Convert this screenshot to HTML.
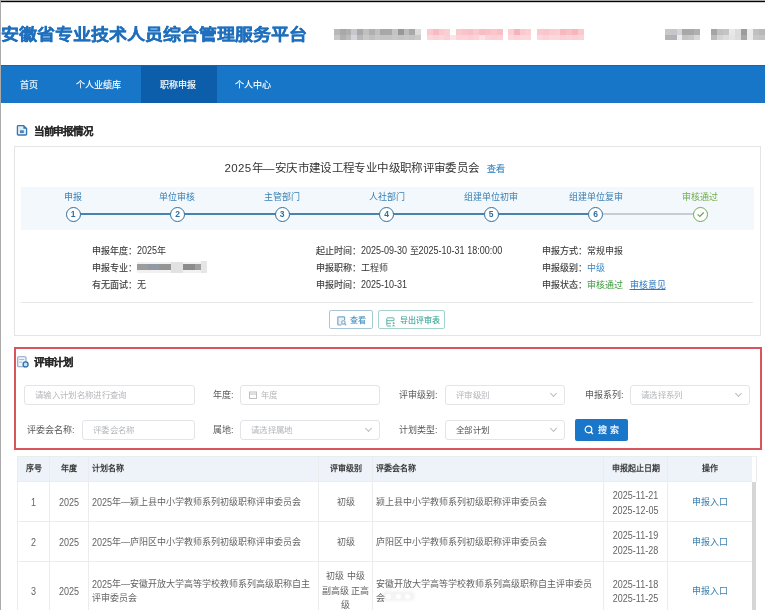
<!DOCTYPE html>
<html lang="zh-CN">
<head>
<meta charset="utf-8">
<style>
*{box-sizing:border-box;margin:0;padding:0}
html,body{width:765px;height:610px;overflow:hidden;background:#fff}body{filter:blur(0.35px)}
body{position:relative;font-family:"Liberation Sans",sans-serif;color:#333;font-size:9px}
.a{position:absolute;white-space:nowrap}
#topline{left:0;top:0;width:765px;height:3px;background:linear-gradient(#a8a8a8 0,#a8a8a8 1px,#050505 1px,#050505 2px,#d0d0d0 2px,#d0d0d0 3px)}
#leftline{left:0;top:0;width:1px;height:610px;background:#ababab}
#title{left:0.5px;top:21.5px;transform:scaleY(0.89);transform-origin:0 50%;font-size:18px;font-weight:bold;-webkit-text-stroke:0.4px #1f6fbd;color:#1f6fbd;line-height:26px}
.mz{position:absolute;height:6px}
#nav{left:1px;top:65px;width:764px;height:38px;background:#1876c9;border-top:1px solid #1065b4}
#nav .it{position:absolute;top:0;height:37px;line-height:39px;color:#fff;font-size:9px;text-align:center;-webkit-text-stroke:0.15px #fff}
#nav .act{background:#0c5eaa}
.sec-title{font-size:10.5px;letter-spacing:-0.3px;font-weight:bold;color:#2a2a2a;line-height:14px;-webkit-text-stroke:0.2px #2a2a2a}
#card{left:14px;top:146px;width:747px;height:190px;border:1px solid #e3e4e6;background:#fff}
#steps{left:21px;top:187px;width:733px;height:43px;background:#f3f8fc}
.lbl{position:absolute;font-size:9px;color:#3a80b5;line-height:12px;text-align:center;width:80px}
.circ{position:absolute;width:15px;height:15px;border:1.8px solid #306f9d;border-radius:50%;background:#fff;color:#306f9d;font-size:8.5px;font-weight:bold;line-height:13.5px;text-align:center}
.info{font-size:9px;color:#333;line-height:12px}
.info b{font-weight:normal;color:#3a3a3a;-webkit-text-stroke:0.12px #3a3a3a}
.btn{position:absolute;height:18px;border:1px solid #7aa6cc;border-radius:2px;font-size:9px;line-height:16px}
#redbox{left:14px;top:347px;width:748px;height:103px;border:2px solid #d8555b}
.inp{position:absolute;height:20px;border:1px solid #e3e4e8;border-radius:3px;background:#fff;font-size:8.45px;letter-spacing:0.35px;color:#b4b6ba;line-height:19px;padding-left:10px}
.flab{position:absolute;font-size:9px;color:#575757;line-height:12px}
.chev{position:absolute;right:7px;top:8px;width:7px;height:4px;background:none}.chev:before{content:"";position:absolute;left:1px;top:-3px;width:4px;height:4px;border-right:1px solid #bdbdbd;border-bottom:1px solid #bdbdbd;transform:rotate(45deg)}
#table{left:17px;top:456px;width:736px}
table{border-collapse:collapse;table-layout:fixed;width:735px}
td,th{white-space:normal;border:1px solid #ebecee;font-size:9px;color:#636363;text-align:center;vertical-align:middle}
th{background:#eef3fa;font-weight:bold;color:#3a3a3a;height:25px;font-size:8px;line-height:12px}
td{line-height:14.5px;padding-top:2px}
td.l,th.l{text-align:left;padding-left:3px;padding-right:5px}
.n{font-style:normal;display:inline-block;transform:scaleY(1.12);transform-origin:50% 78%}
td .n{transform:translateY(0.8px) scaleY(1.12)}
</style>
</head>
<body>
<div class="a" id="topline"></div>
<div class="a" id="leftline"></div>
<div class="a" id="title">安徽省专业技术人员综合管理服务平台</div>

<!-- mosaic header blocks -->
<div style="position:absolute;left:0;top:0;filter:blur(0.6px)">
<div class="a" style="left:334.0px;top:29px;width:6.1px;height:5.7px;background:#b8b8b8"></div>
<div class="a" style="left:334.0px;top:34.7px;width:6.1px;height:5.7px;background:#c8c8c8"></div>
<div class="a" style="left:339.8px;top:29px;width:6.1px;height:5.7px;background:#a8a8a8"></div>
<div class="a" style="left:339.8px;top:34.7px;width:6.1px;height:5.7px;background:#b0b0b0"></div>
<div class="a" style="left:345.6px;top:29px;width:6.1px;height:5.7px;background:#b0aeae"></div>
<div class="a" style="left:345.6px;top:34.7px;width:6.1px;height:5.7px;background:#bcbcbc"></div>
<div class="a" style="left:351.4px;top:29px;width:6.1px;height:5.7px;background:#c8c8cc"></div>
<div class="a" style="left:351.4px;top:34.7px;width:6.1px;height:5.7px;background:#d4d4dc"></div>
<div class="a" style="left:357.2px;top:29px;width:6.1px;height:5.7px;background:#a8a8a8"></div>
<div class="a" style="left:357.2px;top:34.7px;width:6.1px;height:5.7px;background:#b8b8b8"></div>
<div class="a" style="left:363.0px;top:29px;width:6.1px;height:5.7px;background:#c0c0c0"></div>
<div class="a" style="left:363.0px;top:34.7px;width:6.1px;height:5.7px;background:#c8c8c8"></div>
<div class="a" style="left:368.8px;top:29px;width:6.1px;height:5.7px;background:#b0b0b0"></div>
<div class="a" style="left:368.8px;top:34.7px;width:6.1px;height:5.7px;background:#c0c0c0"></div>
<div class="a" style="left:374.6px;top:29px;width:6.1px;height:5.7px;background:#c0c0c0"></div>
<div class="a" style="left:374.6px;top:34.7px;width:6.1px;height:5.7px;background:#c8c8c8"></div>
<div class="a" style="left:380.4px;top:29px;width:6.1px;height:5.7px;background:#a8a8a8"></div>
<div class="a" style="left:380.4px;top:34.7px;width:6.1px;height:5.7px;background:#c4c4c4"></div>
<div class="a" style="left:386.2px;top:29px;width:6.1px;height:5.7px;background:#a8a8a8"></div>
<div class="a" style="left:386.2px;top:34.7px;width:6.1px;height:5.7px;background:#c4c4c4"></div>
<div class="a" style="left:392.0px;top:29px;width:6.1px;height:5.7px;background:#c4c4c4"></div>
<div class="a" style="left:392.0px;top:34.7px;width:6.1px;height:5.7px;background:#c8c8c8"></div>
<div class="a" style="left:397.8px;top:29px;width:6.1px;height:5.7px;background:#989898"></div>
<div class="a" style="left:397.8px;top:34.7px;width:6.1px;height:5.7px;background:#c4c4c4"></div>
<div class="a" style="left:403.6px;top:29px;width:6.1px;height:5.7px;background:#bcbcbc"></div>
<div class="a" style="left:403.6px;top:34.7px;width:6.1px;height:5.7px;background:#c8c8c8"></div>
<div class="a" style="left:409.4px;top:29px;width:6.1px;height:5.7px;background:#a8a8a8"></div>
<div class="a" style="left:409.4px;top:34.7px;width:6.1px;height:5.7px;background:#c4c4c4"></div>
<div class="a" style="left:415.2px;top:29px;width:6.1px;height:5.7px;background:#dcdcdc"></div>
<div class="a" style="left:415.2px;top:34.7px;width:6.1px;height:5.7px;background:#cacaca"></div>
<div class="a" style="left:427.0px;top:29px;width:6.0px;height:5.7px;background:#fac9cf"></div>
<div class="a" style="left:427.0px;top:34.7px;width:6.0px;height:5.7px;background:#fcd7db"></div>
<div class="a" style="left:432.8px;top:29px;width:6.0px;height:5.7px;background:#f7bbc1"></div>
<div class="a" style="left:432.8px;top:34.7px;width:6.0px;height:5.7px;background:#fbd3d7"></div>
<div class="a" style="left:438.5px;top:29px;width:6.0px;height:5.7px;background:#fac9cf"></div>
<div class="a" style="left:438.5px;top:34.7px;width:6.0px;height:5.7px;background:#fcd7db"></div>
<div class="a" style="left:444.2px;top:29px;width:6.0px;height:5.7px;background:#faced3"></div>
<div class="a" style="left:444.2px;top:34.7px;width:6.0px;height:5.7px;background:#fbd1d6"></div>
<div class="a" style="left:450px;top:34.7px;width:6px;height:5.7px;background:#fde3e6"></div>
<div class="a" style="left:456.0px;top:29px;width:6.1px;height:5.7px;background:#fac9cf"></div>
<div class="a" style="left:456.0px;top:34.7px;width:6.1px;height:5.7px;background:#fcd3d7"></div>
<div class="a" style="left:461.8px;top:29px;width:6.1px;height:5.7px;background:#fac3c8"></div>
<div class="a" style="left:461.8px;top:34.7px;width:6.1px;height:5.7px;background:#fcd3d7"></div>
<div class="a" style="left:467.6px;top:29px;width:6.1px;height:5.7px;background:#f9bfc6"></div>
<div class="a" style="left:467.6px;top:34.7px;width:6.1px;height:5.7px;background:#fbcfd4"></div>
<div class="a" style="left:473.4px;top:29px;width:6.1px;height:5.7px;background:#fac9cf"></div>
<div class="a" style="left:473.4px;top:34.7px;width:6.1px;height:5.7px;background:#fcd3d7"></div>
<div class="a" style="left:479.2px;top:29px;width:6.1px;height:5.7px;background:#f8bcc3"></div>
<div class="a" style="left:479.2px;top:34.7px;width:6.1px;height:5.7px;background:#fde0e3"></div>
<div class="a" style="left:485.1px;top:29px;width:6.1px;height:5.7px;background:#f9c1c7"></div>
<div class="a" style="left:485.1px;top:34.7px;width:6.1px;height:5.7px;background:#fcd3d7"></div>
<div class="a" style="left:490.9px;top:29px;width:6.1px;height:5.7px;background:#fac6cb"></div>
<div class="a" style="left:490.9px;top:34.7px;width:6.1px;height:5.7px;background:#fbcfd4"></div>
<div class="a" style="left:496.7px;top:29px;width:6.1px;height:5.7px;background:#f9bfc6"></div>
<div class="a" style="left:496.7px;top:34.7px;width:6.1px;height:5.7px;background:#fbd3d7"></div>
<div class="a" style="left:508.0px;top:29px;width:6.1px;height:5.7px;background:#facfd3"></div>
<div class="a" style="left:508.0px;top:34.7px;width:6.1px;height:5.7px;background:#fcd7db"></div>
<div class="a" style="left:513.8px;top:29px;width:6.1px;height:5.7px;background:#f6b3bb"></div>
<div class="a" style="left:513.8px;top:34.7px;width:6.1px;height:5.7px;background:#fcd3d7"></div>
<div class="a" style="left:519.6px;top:29px;width:6.1px;height:5.7px;background:#fac9cf"></div>
<div class="a" style="left:519.6px;top:34.7px;width:6.1px;height:5.7px;background:#fcd7db"></div>
<div class="a" style="left:525.4px;top:29px;width:6.1px;height:5.7px;background:#faced3"></div>
<div class="a" style="left:525.4px;top:34.7px;width:6.1px;height:5.7px;background:#fcd7db"></div>
<div class="a" style="left:537.0px;top:29px;width:6.1px;height:5.7px;background:#fac9cf"></div>
<div class="a" style="left:537.0px;top:34.7px;width:6.1px;height:5.7px;background:#fcd7db"></div>
<div class="a" style="left:542.8px;top:29px;width:6.1px;height:5.7px;background:#f9c4ca"></div>
<div class="a" style="left:542.8px;top:34.7px;width:6.1px;height:5.7px;background:#fbd3d7"></div>
<div class="a" style="left:548.6px;top:29px;width:6.1px;height:5.7px;background:#fbcbcf"></div>
<div class="a" style="left:548.6px;top:34.7px;width:6.1px;height:5.7px;background:#fcd7db"></div>
<div class="a" style="left:554.4px;top:29px;width:6.1px;height:5.7px;background:#faced3"></div>
<div class="a" style="left:554.4px;top:34.7px;width:6.1px;height:5.7px;background:#fcd7db"></div>
<div class="a" style="left:560.2px;top:29px;width:6.1px;height:5.7px;background:#f7b9bf"></div>
<div class="a" style="left:560.2px;top:34.7px;width:6.1px;height:5.7px;background:#fbd1d6"></div>
<div class="a" style="left:566.1px;top:29px;width:6.1px;height:5.7px;background:#f9bfc6"></div>
<div class="a" style="left:566.1px;top:34.7px;width:6.1px;height:5.7px;background:#fcd3d7"></div>
<div class="a" style="left:571.9px;top:29px;width:6.1px;height:5.7px;background:#f6b6bc"></div>
<div class="a" style="left:571.9px;top:34.7px;width:6.1px;height:5.7px;background:#fbcfd4"></div>
<div class="a" style="left:577.7px;top:29px;width:6.1px;height:5.7px;background:#fac9cf"></div>
<div class="a" style="left:577.7px;top:34.7px;width:6.1px;height:5.7px;background:#fcd3d7"></div>
<div class="a" style="left:664.8px;top:29px;width:6.1px;height:5.7px;background:#c8c8c8"></div>
<div class="a" style="left:664.8px;top:34.7px;width:6.1px;height:5.7px;background:#b4b4b4"></div>
<div class="a" style="left:670.6px;top:29px;width:6.1px;height:5.7px;background:#c4c6cc"></div>
<div class="a" style="left:670.6px;top:34.7px;width:6.1px;height:5.7px;background:#b0b2b8"></div>
<div class="a" style="left:676.5px;top:29px;width:6.1px;height:5.7px;background:#d4d4d4"></div>
<div class="a" style="left:676.5px;top:34.7px;width:6.1px;height:5.7px;background:#ececec"></div>
<div class="a" style="left:682.3px;top:29px;width:6.1px;height:5.7px;background:#a8a8a8"></div>
<div class="a" style="left:682.3px;top:34.7px;width:6.1px;height:5.7px;background:#c4c4c4"></div>
<div class="a" style="left:688.1px;top:29px;width:6.1px;height:5.7px;background:#a8a8a8"></div>
<div class="a" style="left:688.1px;top:34.7px;width:6.1px;height:5.7px;background:#c8c8c8"></div>
<div class="a" style="left:694.0px;top:29px;width:6.1px;height:5.7px;background:#b0b0b0"></div>
<div class="a" style="left:694.0px;top:34.7px;width:6.1px;height:5.7px;background:#d8d8d8"></div>
<div class="a" style="left:711.0px;top:29px;width:6.3px;height:5.7px;background:#a4a4a4"></div>
<div class="a" style="left:711.0px;top:34.7px;width:6.3px;height:5.7px;background:#bcbcbc"></div>
<div class="a" style="left:717.0px;top:29px;width:6.3px;height:5.7px;background:#c0c0c0"></div>
<div class="a" style="left:717.0px;top:34.7px;width:6.3px;height:5.7px;background:#d4d4d4"></div>
<div class="a" style="left:723.0px;top:29px;width:6.3px;height:5.7px;background:#c4c4c4"></div>
<div class="a" style="left:723.0px;top:34.7px;width:6.3px;height:5.7px;background:#dcdcdc"></div>
<div class="a" style="left:729.0px;top:29px;width:6.3px;height:5.7px;background:#e8e8e8"></div>
<div class="a" style="left:729.0px;top:34.7px;width:6.3px;height:5.7px;background:#e4e4e4"></div>
<div class="a" style="left:735.0px;top:29px;width:6.3px;height:5.7px;background:#dcdcdc"></div>
<div class="a" style="left:735.0px;top:34.7px;width:6.3px;height:5.7px;background:#dcdcdc"></div>
<div class="a" style="left:741.0px;top:29px;width:6.3px;height:5.7px;background:#9c9c9c"></div>
<div class="a" style="left:741.0px;top:34.7px;width:6.3px;height:5.7px;background:#a8a8a8"></div>
<div class="a" style="left:747.0px;top:29px;width:6.3px;height:5.7px;background:#ececec"></div>
<div class="a" style="left:747.0px;top:34.7px;width:6.3px;height:5.7px;background:#ececec"></div>
<div class="a" style="left:753.0px;top:29px;width:6.3px;height:5.7px;background:#c0c0c0"></div>
<div class="a" style="left:753.0px;top:34.7px;width:6.3px;height:5.7px;background:#c8c8c8"></div>
<div class="a" style="left:759.0px;top:29px;width:6.3px;height:5.7px;background:#b8b8b8"></div>
<div class="a" style="left:759.0px;top:34.7px;width:6.3px;height:5.7px;background:#c4c4c4"></div>
</div>
<div class="a" id="nav">
  <div class="it" style="left:0;width:56px">首页</div>
  <div class="it" style="left:56px;width:84px;text-indent:-1px">个人业绩库</div>
  <div class="it act" style="left:140px;width:76px;text-indent:-2px">职称申报</div>
  <div class="it" style="left:216px;width:74px;text-indent:-3px">个人中心</div>
</div>

<!-- section 1 title -->
<svg class="a" style="left:16px;top:124px" width="12" height="12" viewBox="0 0 12 12"><path d="M2.2 1.6H7.6L10.6 4.6V10.2Q10.6 11 9.8 11H2.2Q1.4 11 1.4 10.2V2.4Q1.4 1.6 2.2 1.6z" fill="#dcedf8" stroke="#3a76ae" stroke-width="1.3"/><path d="M7.4 1.4L10.8 4.8H7.4z" fill="#3a76ae"/><rect x="4" y="6.3" width="3.8" height="2.7" fill="#4c82b9"/></svg>
<div class="a sec-title" style="left:34px;top:124px">当前申报情况</div>

<div class="a" id="card"></div>
<div class="a" style="left:224.5px;top:161px;font-size:11.5px;letter-spacing:0.37px;color:#333;line-height:14px">2025年—安庆市建设工程专业中级职称评审委员会</div>
<div class="a" style="left:487px;top:163px;font-size:9px;color:#3580bd;line-height:12px;-webkit-text-stroke:0.15px #3580bd">查看</div>

<div class="a" id="steps"></div>
<div class="a" style="left:73px;top:213px;width:523px;height:2px;background:#4783ac"></div>
<div class="a" style="left:596px;top:213px;width:104px;height:2px;background:#c9ccd0"></div>

<div class="lbl" style="left:33px;top:191px">申报</div>
<div class="lbl" style="left:137px;top:191px">单位审核</div>
<div class="lbl" style="left:242px;top:191px">主管部门</div>
<div class="lbl" style="left:347px;top:191px">人社部门</div>
<div class="lbl" style="left:451px;top:191px">组建单位初审</div>
<div class="lbl" style="left:556px;top:191px">组建单位复审</div>
<div class="lbl" style="left:660px;top:191px;color:#70ad4c">审核通过</div>

<div class="circ" style="left:65.5px;top:206.5px">1</div>
<div class="circ" style="left:170px;top:206.5px">2</div>
<div class="circ" style="left:274.5px;top:206.5px">3</div>
<div class="circ" style="left:379px;top:206.5px">4</div>
<div class="circ" style="left:483.5px;top:206.5px">5</div>
<div class="circ" style="left:588px;top:206.5px">6</div>
<div class="circ" style="left:692.5px;top:206.5px;border:1.8px solid #6eac52"></div>
<svg class="a" style="left:695px;top:209px" width="11" height="10" viewBox="0 0 11 10"><path d="M2.6 5.4l2.2 2 3.9-3.9" fill="none" stroke="#6a9e5e" stroke-width="1.2"/></svg>

<!-- info -->
<div class="a info" style="left:92px;top:245px"><b>申报年度：</b><i class="n">2025</i>年</div>
<div class="a info" style="left:92px;top:262px"><b>申报专业：</b></div>
<div style="position:absolute;left:0;top:0;filter:blur(0.5px)">
<div class="a" style="left:137px;top:262px;width:70px;height:11px;background:#f1f1f1"></div>
<div class="a" style="left:137px;top:264px;width:11px;height:6px;background:#9c9c9c"></div>
<div class="a" style="left:148px;top:264px;width:11px;height:6px;background:#9298a4"></div>
<div class="a" style="left:159px;top:264px;width:12px;height:6px;background:#959595"></div>
<div class="a" style="left:171px;top:262px;width:12px;height:11px;background:#e2e2e2"></div>
<div class="a" style="left:183px;top:264px;width:12px;height:6px;background:#8c8c8c"></div>
<div class="a" style="left:195px;top:264px;width:6px;height:6px;background:#a0a0a0"></div>
<div class="a" style="left:201px;top:261px;width:6px;height:12px;background:#e6e6e6"></div>
</div>
<div class="a info" style="left:92px;top:279px"><b>有无面试：</b>无</div>

<div class="a info" style="left:316px;top:245px"><b>起止时间：</b><i class="n">2025-09-30</i> 至<i class="n">2025-10-31</i> <i class="n">18:00:00</i></div>
<div class="a info" style="left:316px;top:262px"><b>申报职称：</b>工程师</div>
<div class="a info" style="left:316px;top:279px"><b>申报时间：</b><i class="n">2025-10-31</i></div>

<div class="a info" style="left:542px;top:245px"><b>申报方式：</b>常规申报</div>
<div class="a info" style="left:542px;top:262px"><b>申报级别：</b><span style="color:#3a88c8">中级</span></div>
<div class="a info" style="left:542px;top:279px"><b>申报状态：</b><span style="color:#3c9a3c">审核通过</span> <span style="color:#2a78c0;text-decoration:underline;margin-left:4px">审核意见</span></div>

<div class="a" style="left:21px;top:302px;width:732px;height:1px;background:#e6e7e9"></div>

<div class="btn" style="left:329px;top:310px;width:44px;height:19px;border-color:#a9c5d8"><svg style="position:absolute;left:6.5px;top:5px" width="10" height="10" viewBox="0 0 10 10"><path d="M7.6 4.2V1.6Q7.6 0.8 6.8 0.8H1.6Q0.8 0.8 0.8 1.6V8.2Q0.8 9 1.6 9H4.5" fill="#e6f1f8" stroke="#7fa8c6" stroke-width="1.2"/><circle cx="6.4" cy="6.4" r="1.7" fill="#fff" stroke="#7fa8c6" stroke-width="1.1"/><path d="M7.6 7.7L9.2 9.3" stroke="#7fa8c6" stroke-width="1.1"/></svg><span style="position:absolute;left:20px;top:1.5px;font-size:8px;color:#3a8bbf;line-height:16px;-webkit-text-stroke:0.1px #3a8bbf">查看</span></div>
<div class="btn" style="left:378px;top:310px;width:67px;height:19px;border-color:#a3d3cb"><svg style="position:absolute;left:6.5px;top:5.5px" width="11" height="10" viewBox="0 0 11 10"><path d="M8 3.5V1.6Q8 0.8 7.2 0.8H1.6Q0.8 0.8 0.8 1.6V8.2Q0.8 9 1.6 9H5" fill="none" stroke="#5fb5a8" stroke-width="1"/><path d="M0.8 3.7H8M0.8 6.3H5" stroke="#5fb5a8" stroke-width="1"/><circle cx="7.6" cy="6.3" r="1" fill="#5fb5a8"/><path d="M5.9 9.2Q7.6 6.9 9.3 9.2" fill="#5fb5a8"/></svg><span style="position:absolute;left:20.5px;top:1.5px;font-size:8px;color:#37a496;line-height:16px;-webkit-text-stroke:0.1px #37a496">导出评审表</span></div>

<!-- section 2 -->
<div class="a" id="redbox"></div>
<svg class="a" style="left:16px;top:355px" width="13" height="13" viewBox="0 0 13 13"><rect x="1.7" y="1.8" width="8.3" height="10" rx="1" fill="#eef4fb" stroke="#8ea4c4" stroke-width="1.1"/><path d="M3.2 4.5h5M3.2 7.2h3" stroke="#a9bcd6" stroke-width="1"/><circle cx="9.6" cy="9.4" r="2.5" fill="#bfe3f8" stroke="#2f6fa8" stroke-width="1.3"/></svg>
<div class="a sec-title" style="left:34px;top:355px">评审计划</div>

<div class="inp" style="left:24px;top:385px;width:171px">请输入计划名称进行查询</div>
<div class="flab" style="left:213px;top:389px">年度:</div>
<div class="inp" style="left:240px;top:385px;width:140px;padding-left:20px">年度<svg style="position:absolute;left:8px;top:5px" width="8" height="8" viewBox="0 0 8 8"><rect x="0.5" y="1" width="7" height="6.5" fill="none" stroke="#c0c0c0"/><path d="M0.5 3h7" stroke="#c0c0c0"/></svg></div>
<div class="flab" style="left:399px;top:389px">评审级别:</div>
<div class="inp" style="left:445px;top:385px;width:120px">评审级别<div class="chev"></div></div>
<div class="flab" style="left:585px;top:389px">申报系列:</div>
<div class="inp" style="left:630px;top:385px;width:120px">请选择系列<div class="chev"></div></div>

<div class="flab" style="left:27px;top:424px">评委会名称:</div>
<div class="inp" style="left:82px;top:420px;width:113px">评委会名称</div>
<div class="flab" style="left:213px;top:424px">属地:</div>
<div class="inp" style="left:240px;top:420px;width:140px">请选择属地<div class="chev"></div></div>
<div class="flab" style="left:399px;top:424px">计划类型:</div>
<div class="inp" style="left:445px;top:420px;width:120px;color:#505050">全部计划<div class="chev"></div></div>
<div class="a" style="left:575px;top:419px;width:53px;height:22px;background:#1a76c9;border-radius:2px;color:#fff;font-size:9px;line-height:22px;padding-left:23px;-webkit-text-stroke:0.2px #fff">搜 索<svg style="position:absolute;left:9px;top:6px" width="10" height="10" viewBox="0 0 10 10"><circle cx="4.5" cy="4.5" r="3.3" fill="none" stroke="#fff" stroke-width="1.2"/><path d="M7 7l2 2" stroke="#fff" stroke-width="1.2"/></svg></div>

<!-- dots -->
<div class="a" style="left:381px;top:590.5px;width:34px;height:10px;border-radius:5px;background:#f4f4f4;filter:blur(1px)"></div>
<div class="a" style="left:386px;top:593.5px;width:5px;height:5px;border-radius:50%;background:#fff"></div>
<div class="a" style="left:395.5px;top:593.5px;width:5px;height:5px;border-radius:50%;background:#fff"></div>
<div class="a" style="left:405px;top:593.5px;width:5px;height:5px;border-radius:50%;background:#fff"></div>
<!-- table -->
<div class="a" id="table">
<table>
<colgroup><col style="width:32px"><col style="width:39px"><col style="width:230px"><col style="width:54px"><col style="width:231px"><col style="width:64px"><col style="width:85px"></colgroup>
<tr><th>序号</th><th>年度</th><th class="l">计划名称</th><th>评审级别</th><th class="l">评委会名称</th><th>申报起止日期</th><th>操作</th></tr>
<tr style="height:40px"><td><i class="n">1</i></td><td><i class="n">2025</i></td><td class="l"><i class="n">2025</i>年—颍上县中小学教师系列初级职称评审委员会</td><td>初级</td><td class="l">颍上县中小学教师系列初级职称评审委员会</td><td><i class="n">2025-11-21</i><br><i class="n">2025-12-05</i></td><td style="color:#3b7fae">申报入口</td></tr>
<tr style="height:40px"><td><i class="n">2</i></td><td><i class="n">2025</i></td><td class="l"><i class="n">2025</i>年—庐阳区中小学教师系列初级职称评审委员会</td><td>初级</td><td class="l">庐阳区中小学教师系列初级职称评审委员会</td><td><i class="n">2025-11-19</i><br><i class="n">2025-11-28</i></td><td style="color:#3b7fae">申报入口</td></tr>
<tr style="height:57px"><td><i class="n">3</i></td><td><i class="n">2025</i></td><td class="l"><i class="n">2025</i>年—安徽开放大学高等学校教师系列高级职称自主评审委员会</td><td>初级 中级<br>副高级 正高<br>级</td><td class="l">安徽开放大学高等学校教师系列高级职称自主评审委员会</td><td><i class="n">2025-11-18</i><br><i class="n">2025-11-25</i></td><td style="color:#3b7fae">申报入口</td></tr>
</table>
</div>
<div class="a" style="left:752px;top:456px;width:5px;height:26px;background:#fff;border-right:1px solid #ebebeb;border-top:1px solid #f0f0f0"></div>
<div class="a" style="left:752px;top:482px;width:4px;height:128px;background:#d6d6d6"></div>
</body>
</html>
